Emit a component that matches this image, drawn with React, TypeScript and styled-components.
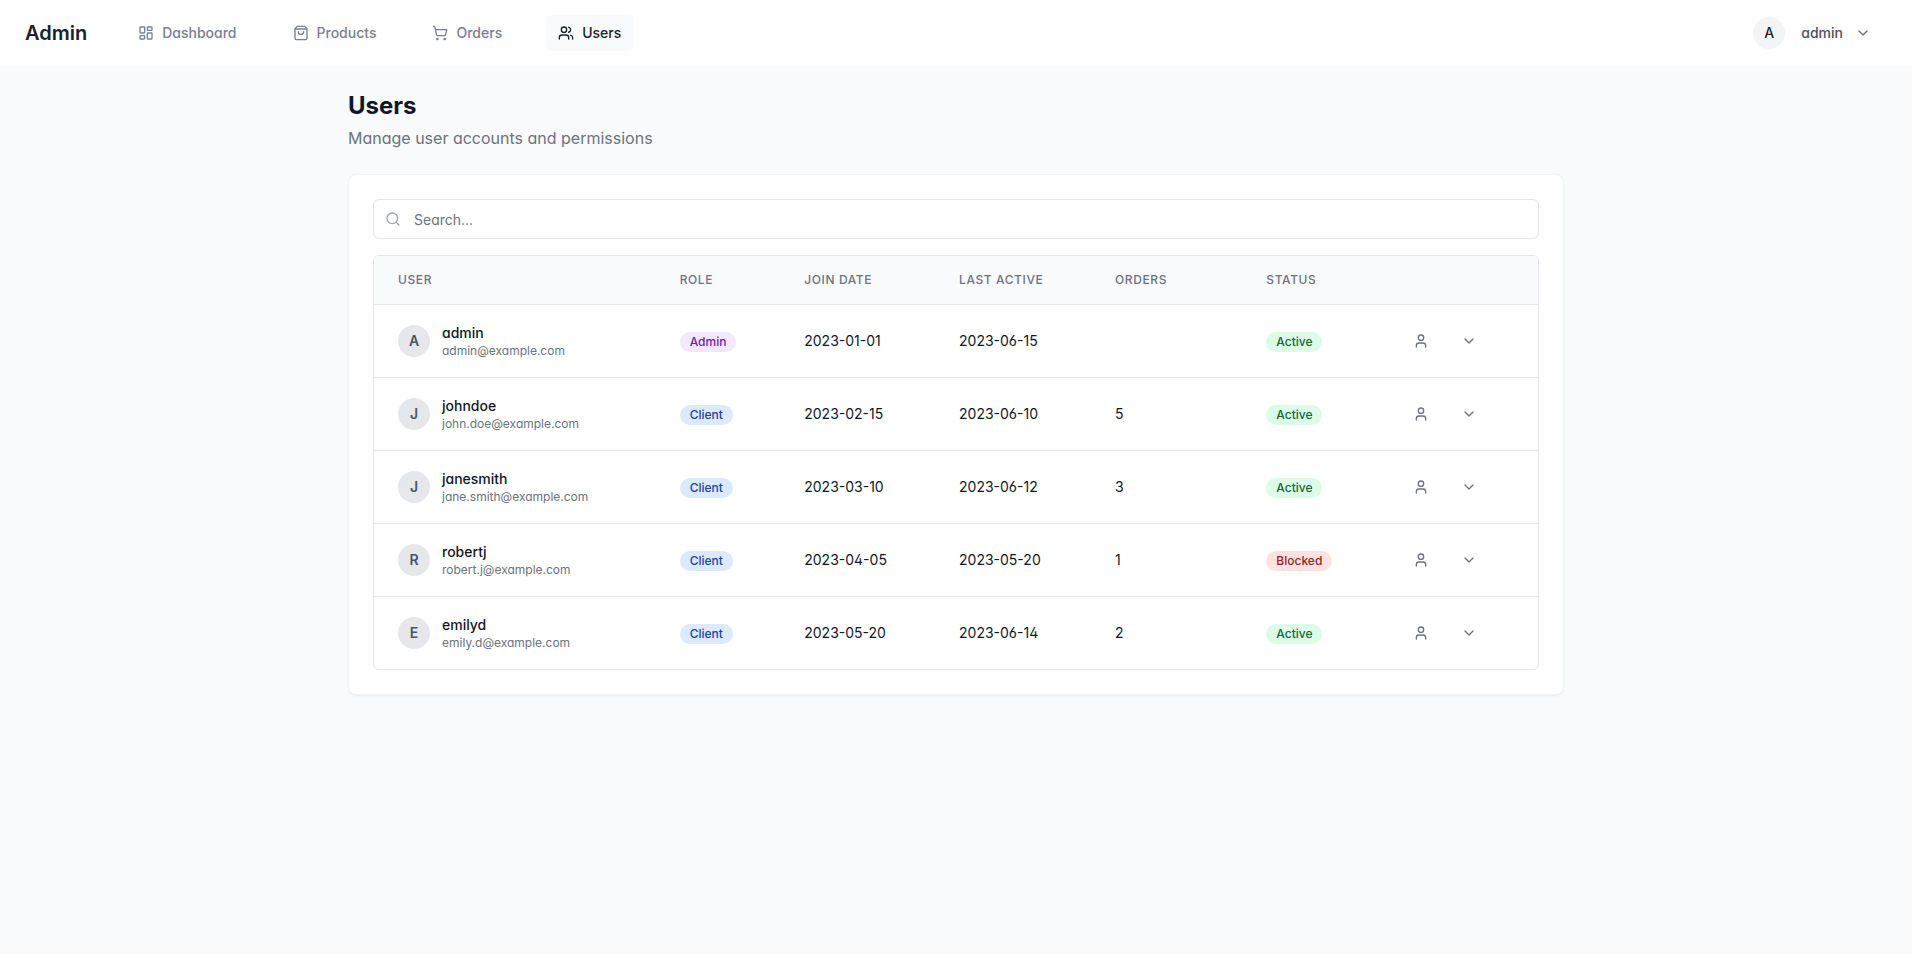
import React from "react";
import styled, { createGlobalStyle } from "styled-components";
import { LayoutDashboard, ShoppingBag, ShoppingCart, Users, User, ChevronDown, Search } from "lucide-react";

const GlobalStyle = createGlobalStyle`
  *, *::before, *::after { box-sizing: border-box; }
  body {
    margin: 0;
    background: #f9fafc;
    color: #0f1729;
    font-family: Inter, "Liberation Sans", sans-serif;
    font-feature-settings: "cv02", "cv03", "cv04", "cv11";
    font-size: 14px;
    line-height: 20px;
  }
  button, input { font: inherit; font-feature-settings: inherit; color: inherit; }
`;

const Header = styled.header`
  display: flex;
  align-items: center;
  justify-content: space-between;
  height: 66px;
  padding: 0 25px;
  background: #fefefe;
`;

const HeaderLeft = styled.div`
  display: flex;
  align-items: center;
  gap: 39px;
`;

const Brand = styled.a`
  font-size: 20px;
  line-height: 28px;
  font-weight: 600;
  color: #1a1f2c;
  text-decoration: none;
`;

const Nav = styled.nav`
  display: flex;
  gap: 32px;
`;

const NavLink = styled.a<{ $active?: boolean }>`
  display: flex;
  align-items: center;
  gap: 8px;
  padding: 8px 12px;
  border-radius: 6px;
  font-weight: 500;
  text-decoration: none;
  color: ${(p) => (p.$active ? "#1a1f2c" : "#7a8091")};
  background: ${(p) => (p.$active ? "#f9fafc" : "transparent")};
`;

const Account = styled.div`
  display: flex;
  align-items: center;
  gap: 16px;
`;

const AccountButton = styled.button`
  display: flex;
  align-items: center;
  gap: 12px;
  padding: 8px 16px 8px 0;
  border: 0;
  background: transparent;
  font-weight: 500;
  color: #4b5162;

  svg { color: #6b7280; }
`;

const Avatar = styled.span<{ $light?: boolean }>`
  display: flex;
  flex: none;
  align-items: center;
  justify-content: center;
  width: 32px;
  height: 32px;
  border-radius: 50%;
  font-weight: ${(p) => (p.$light ? 500 : 600)};
  color: ${(p) => (p.$light ? "#1a1f2c" : "#4b5563")};
  background: ${(p) => (p.$light ? "#f3f4f6" : "#e5e7eb")};
`;

const Main = styled.main`
  max-width: 1280px;
  margin: 0 auto;
  padding: 24px 32px;
`;

const Title = styled.h1`
  margin: 0 0 4px;
  font-size: 24px;
  line-height: 32px;
  font-weight: 700;
  color: #0f1729;
`;

const Subtitle = styled.p`
  margin: 0 0 24px;
  font-size: 16px;
  line-height: 24px;
  color: #6b7280;
`;

const Card = styled.section`
  padding: 24px;
  border: 1px solid #f3f4f6;
  border-radius: 8px;
  background: #ffffff;
  box-shadow: 0 1px 2px rgba(0, 0, 0, 0.05);
`;

const SearchBox = styled.label`
  display: flex;
  align-items: center;
  gap: 13px;
  height: 40px;
  margin-bottom: 16px;
  padding: 0 11px;
  border: 1px solid #e5e7eb;
  border-radius: 6px;
  color: #9ca3af;
`;

const SearchInput = styled.input`
  flex: 1;
  min-width: 0;
  padding: 2px 0 0;
  border: 0;
  outline: 0;
  background: transparent;
  color: #0f1729;
  &::placeholder { color: #6b7280; opacity: 1; }
`;

const TableFrame = styled.div`
  overflow: hidden;
  border: 1px solid #e5e7eb;
  border-radius: 6px;
`;

const Table = styled.table`
  width: 100%;
  table-layout: fixed;
  border-spacing: 0;
`;

const Column = styled.col<{ $share: number }>`
  width: ${(p) => p.$share}%;
`;

const HeadCell = styled.th`
  height: 49px;
  padding: 0 24px;
  border-bottom: 1px solid #e5e7eb;
  background: #f9fafc;
  font-size: 12px;
  line-height: 16px;
  font-weight: 500;
  letter-spacing: 0.6px;
  text-align: left;
  text-transform: uppercase;
  white-space: nowrap;
  color: #6b7280;
`;

const Row = styled.tr`
  &:not(:last-child) > td { border-bottom: 1px solid #e5e7eb; }
`;

const Cell = styled.td`
  padding: 16px 24px;
  white-space: nowrap;
`;

const Person = styled.div`
  display: flex;
  align-items: center;
  gap: 12px;
  height: 40px;
`;

const PersonName = styled.div`
  font-weight: 500;
`;

const PersonEmail = styled.div`
  font-size: 12px;
  line-height: 16px;
  color: #6b7280;
`;

const tones = {
  Admin: ["#6b21a8", "#f3e8ff"],
  Client: ["#1e40af", "#dbeafe"],
  Active: ["#166534", "#dcfce7"],
  Blocked: ["#991b1b", "#fee2e2"],
};

const Badge = styled.span<{ $tone: keyof typeof tones }>`
  display: inline-flex;
  padding: 2px 10px;
  border-radius: 10px;
  font-size: 12px;
  line-height: 16px;
  font-weight: 500;
  color: ${(p) => tones[p.$tone][0]};
  background: ${(p) => tones[p.$tone][1]};
`;

const Actions = styled.div`
  display: flex;
  gap: 8px;
`;

const IconButton = styled.button`
  display: flex;
  flex: none;
  align-items: center;
  justify-content: center;
  width: 40px;
  height: 36px;
  padding: 0;
  border: 0;
  border-radius: 6px;
  background: transparent;
  color: #6b7280;
`;

type UserRow = {
  name: string;
  email: string;
  role: "Admin" | "Client";
  joined: string;
  lastActive: string;
  orders?: number;
  status: "Active" | "Blocked";
};

const users: UserRow[] = [
  { name: "admin", email: "admin@example.com", role: "Admin", joined: "2023-01-01", lastActive: "2023-06-15", status: "Active" },
  { name: "johndoe", email: "john.doe@example.com", role: "Client", joined: "2023-02-15", lastActive: "2023-06-10", orders: 5, status: "Active" },
  { name: "janesmith", email: "jane.smith@example.com", role: "Client", joined: "2023-03-10", lastActive: "2023-06-12", orders: 3, status: "Active" },
  { name: "robertj", email: "robert.j@example.com", role: "Client", joined: "2023-04-05", lastActive: "2023-05-20", orders: 1, status: "Blocked" },
  { name: "emilyd", email: "emily.d@example.com", role: "Client", joined: "2023-05-20", lastActive: "2023-06-14", orders: 2, status: "Active" },
];

const columnShares = [24.2, 10.7, 13.3, 13.4, 13, 11.6, 13.8];

const navItems = [
  { label: "Dashboard", Icon: LayoutDashboard },
  { label: "Products", Icon: ShoppingBag },
  { label: "Orders", Icon: ShoppingCart },
  { label: "Users", Icon: Users },
];

export default function App() {
  return (
    <>
      <GlobalStyle />
      <Header>
        <HeaderLeft>
          <Brand href="#">Admin</Brand>
          <Nav>
            {navItems.map(({ label, Icon }) => (
              <NavLink key={label} href={`#${label.toLowerCase()}`} $active={label === "Users"}>
                <Icon size={16} />
                {label}
              </NavLink>
            ))}
          </Nav>
        </HeaderLeft>
        <Account>
          <Avatar $light>A</Avatar>
          <AccountButton type="button">
            admin
            <ChevronDown size={16} />
          </AccountButton>
        </Account>
      </Header>
      <Main>
        <Title>Users</Title>
        <Subtitle>Manage user accounts and permissions</Subtitle>
        <Card>
          <SearchBox>
            <Search size={16} />
            <SearchInput type="search" aria-label="Search users" placeholder="Search..." />
          </SearchBox>
          <TableFrame>
            <Table>
              <colgroup>
                {columnShares.map((share) => (
                  <Column key={share} $share={share} />
                ))}
              </colgroup>
              <thead>
                <tr>
                  <HeadCell>User</HeadCell>
                  <HeadCell>Role</HeadCell>
                  <HeadCell>Join Date</HeadCell>
                  <HeadCell>Last Active</HeadCell>
                  <HeadCell>Orders</HeadCell>
                  <HeadCell>Status</HeadCell>
                  <HeadCell aria-label="Actions" />
                </tr>
              </thead>
              <tbody>
                {users.map((u) => (
                  <Row key={u.name}>
                    <Cell>
                      <Person>
                        <Avatar>{u.name[0].toUpperCase()}</Avatar>
                        <div>
                          <PersonName>{u.name}</PersonName>
                          <PersonEmail>{u.email}</PersonEmail>
                        </div>
                      </Person>
                    </Cell>
                    <Cell><Badge $tone={u.role}>{u.role}</Badge></Cell>
                    <Cell>{u.joined}</Cell>
                    <Cell>{u.lastActive}</Cell>
                    <Cell>{u.orders}</Cell>
                    <Cell><Badge $tone={u.status}>{u.status}</Badge></Cell>
                    <Cell>
                      <Actions>
                        <IconButton type="button" aria-label={`View ${u.name}`}><User size={16} /></IconButton>
                        <IconButton type="button" aria-label={`More actions for ${u.name}`}><ChevronDown size={16} /></IconButton>
                      </Actions>
                    </Cell>
                  </Row>
                ))}
              </tbody>
            </Table>
          </TableFrame>
        </Card>
      </Main>
    </>
  );
}
